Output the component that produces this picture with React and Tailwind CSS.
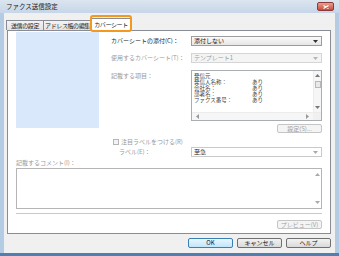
import React from 'react';

const font = { fontFamily: '"Noto Sans CJK JP", "Noto Sans", sans-serif' };

const Arrow = ({ dir = 'down', color = '#333' }) => {
  const pts = {
    down: '0,0 5,0 2.5,3',
    up: '0,3 5,3 2.5,0',
    left: '3,0 3,5 0,2.5',
    right: '0,0 0,5 3,2.5',
  }[dir];
  const vertical = dir === 'down' || dir === 'up';
  return (
    <svg width={vertical ? 5 : 3} height={vertical ? 3 : 5} viewBox={vertical ? '0 0 5 3' : '0 0 3 5'}>
      <polygon points={pts} fill={color} />
    </svg>
  );
};

const Select = ({ value, disabled }) => (
  <div
    className={`flex h-[10px] w-[131px] items-center justify-between border pl-[2px] pr-[3px] ${
      disabled ? 'border-[#d5d5d5] bg-[#f4f4f4] text-[#9a9a9a]' : 'border-[#9c9c9c] bg-gradient-to-b from-[#fbfbfb] to-[#e6e6e6] text-[#111]'
    }`}
  >
    <span>{value}</span>
    <Arrow color={disabled ? '#b5b5b5' : '#333'} />
  </div>
);

const Button = ({ children, disabled, def, className = '' }) => (
  <div
    className={`flex items-center justify-center rounded-[2px] border ${
      def
        ? 'border-[#3c7fb1] bg-gradient-to-b from-[#eaf6fd] to-[#bee6fd] text-[#111]'
        : disabled
        ? 'border-[#c5c5c5] bg-[#f4f4f4] text-[#a0a0a0]'
        : 'border-[#707070] bg-gradient-to-b from-[#f2f2f2] to-[#dadada] text-[#111]'
    } ${className}`}
  >
    {children}
  </div>
);

const rows = [
  ['発信元', ''],
  ['発信人名称：', 'あり'],
  ['会社名：', 'あり'],
  ['部署名：', 'あり'],
  ['ファクス番号：', 'あり'],
];

export default function App() {
  return (
    <div style={font} className="flex h-[256px] w-[339px] flex-col bg-[#b4cbe4] text-[6px] leading-none text-[#222]">
      {/* title bar */}
      <div className="flex h-[13px] shrink-0 items-center justify-between bg-gradient-to-b from-[#dbe5f0] to-[#c6d6e8] pl-[6px] pr-[5px]">
        <span className="text-[6.5px] text-[#222]">ファクス送信設定</span>
        <div className="flex h-[9px] w-[17px] items-center justify-center rounded-[2px] border border-[#8b3a3a] bg-gradient-to-b from-[#e8a090] to-[#c74a3c]">
          <svg width="6" height="4" viewBox="0 0 6 4">
            <path d="M0.5 0.5 L5.5 3.5 M5.5 0.5 L0.5 3.5" stroke="#fff" strokeWidth="1.2" />
          </svg>
        </div>
      </div>

      {/* body */}
      <div className="mx-[4px] flex flex-1 flex-col bg-[#f0f0f0] pl-[3px] pr-[4px]">
        {/* tabs */}
        <div className="flex h-[17px] items-end tracking-[-0.4px]">
          <div className="-ml-[1px] flex h-[10px] w-[38px] items-center justify-center border border-b-0 border-[#898c95] bg-gradient-to-b from-[#f3f3f3] to-[#e3e3e3]">送信の設定</div>
          <div className="-ml-px flex h-[10px] w-[49px] items-center justify-center border border-b-0 border-[#898c95] bg-gradient-to-b from-[#f3f3f3] to-[#e3e3e3]">アドレス帳の編集</div>
          <div className="relative -ml-px flex h-[12px] w-[40px] items-center justify-center border border-b-0 border-[#898c95] bg-white">
            カバーシート
            <div className="absolute -bottom-[2px] -left-[2px] -right-[2px] -top-[4px] rounded-[3px] border-2 border-[#f39a1e]" />
          </div>
        </div>

        {/* panel */}
        <div className="flex h-[204px] flex-col border border-[#898c95] bg-white px-[8px] pt-[1px]">
          <div className="flex">
            <div className="h-[96px] w-[83px] shrink-0 bg-[#d9e9fb]" />
            <div className="ml-[12px] flex flex-1 flex-col pt-[4px]">
              <div className="flex items-center justify-between">
                <span>カバーシートの添付(C)：</span>
                <Select value="添付しない" />
              </div>
              <div className="mt-[7px] flex items-center justify-between text-[#9a9a9a]">
                <span>使用するカバーシート(T)：</span>
                <Select value="テンプレート1" disabled />
              </div>
              <div className="mt-[7px] flex justify-between">
                <span className="pt-[3px] text-[#9a9a9a]">記載する項目：</span>
                <div className="flex h-[51px] w-[131px] flex-col border border-[#a9adb4] bg-white">
                  <div className="flex flex-1">
                    <div className="flex-1 pl-[2px] pt-[2px] text-[5.5px] text-[#444]">
                      {rows.map(([k, v]) => (
                        <div key={k} className="flex h-[6px] items-center overflow-hidden leading-[6px]">
                          <span className="w-[58px]">{k}</span>
                          <span>{v}</span>
                        </div>
                      ))}
                    </div>
                    <div className="flex w-[8px] flex-col items-center border-l border-[#ececec] bg-[#f6f6f6] py-[3px]">
                      <Arrow dir="up" color="#777" />
                      <div className="mt-[4px] h-[7px] w-[6px] border border-[#b8b8b8] bg-[#e9e9e9]" />
                      <div className="flex-1" />
                      <Arrow dir="down" color="#777" />
                    </div>
                  </div>
                  <div className="flex h-[8px] items-center border-t border-[#ececec] bg-[#f6f6f6]">
                    <div className="flex flex-1 items-center justify-between px-[4px]">
                      <Arrow dir="left" color="#999" />
                      <Arrow dir="right" color="#999" />
                    </div>
                    <div className="h-full w-[8px] bg-[#f0f0f0]" />
                  </div>
                </div>
              </div>
              <div className="mt-[3px] flex justify-end">
                <Button disabled className="h-[9px] w-[45px]">設定(S)...</Button>
              </div>
              <div className="mt-[6px] flex items-center pl-[2px] text-[#9a9a9a]">
                <div className="mr-[2px] h-[6px] w-[6px] border border-[#b5b5b5] bg-[#f4f4f4]" />
                注目ラベルをつける(R)
              </div>
              <div className="mt-[2px] flex items-center justify-between">
                <span className="pl-[8px] text-[#9a9a9a]">ラベル(E)：</span>
                <div className="flex h-[10px] w-[131px] items-center justify-between border border-[#c9c9c9] bg-white pl-[2px] pr-[3px] text-[#222]">
                  <span>至急</span>
                  <Arrow color="#aaa" />
                </div>
              </div>
            </div>
          </div>

          <div className="mt-[3px] text-[#9a9a9a]">記載するコメント(I)：</div>
          <div className="mt-[2px] flex h-[41px] border border-[#b5b5b5] bg-white">
            <div className="flex-1" />
            <div className="flex w-[8px] flex-col items-center justify-between py-[4px]">
              <Arrow dir="up" color="#aaa" />
              <Arrow dir="down" color="#aaa" />
            </div>
          </div>
          <div className="mt-[4px] h-px bg-[#c9c9c9]" />
          <div className="mt-[6px] flex justify-end">
            <Button disabled className="h-[9px] w-[45px]">プレビュー(V)</Button>
          </div>
        </div>

        {/* dialog buttons */}
        <div className="mt-[4px] flex justify-end gap-[4px]">
          <Button def className="h-[10px] w-[45px]">OK</Button>
          <Button className="h-[10px] w-[45px]">キャンセル</Button>
          <Button className="h-[10px] w-[45px]">ヘルプ</Button>
        </div>
        <div className="flex-1" />
      </div>
      <div className="h-[3px] shrink-0 bg-[#4d7fb3]" />
    </div>
  );
}
